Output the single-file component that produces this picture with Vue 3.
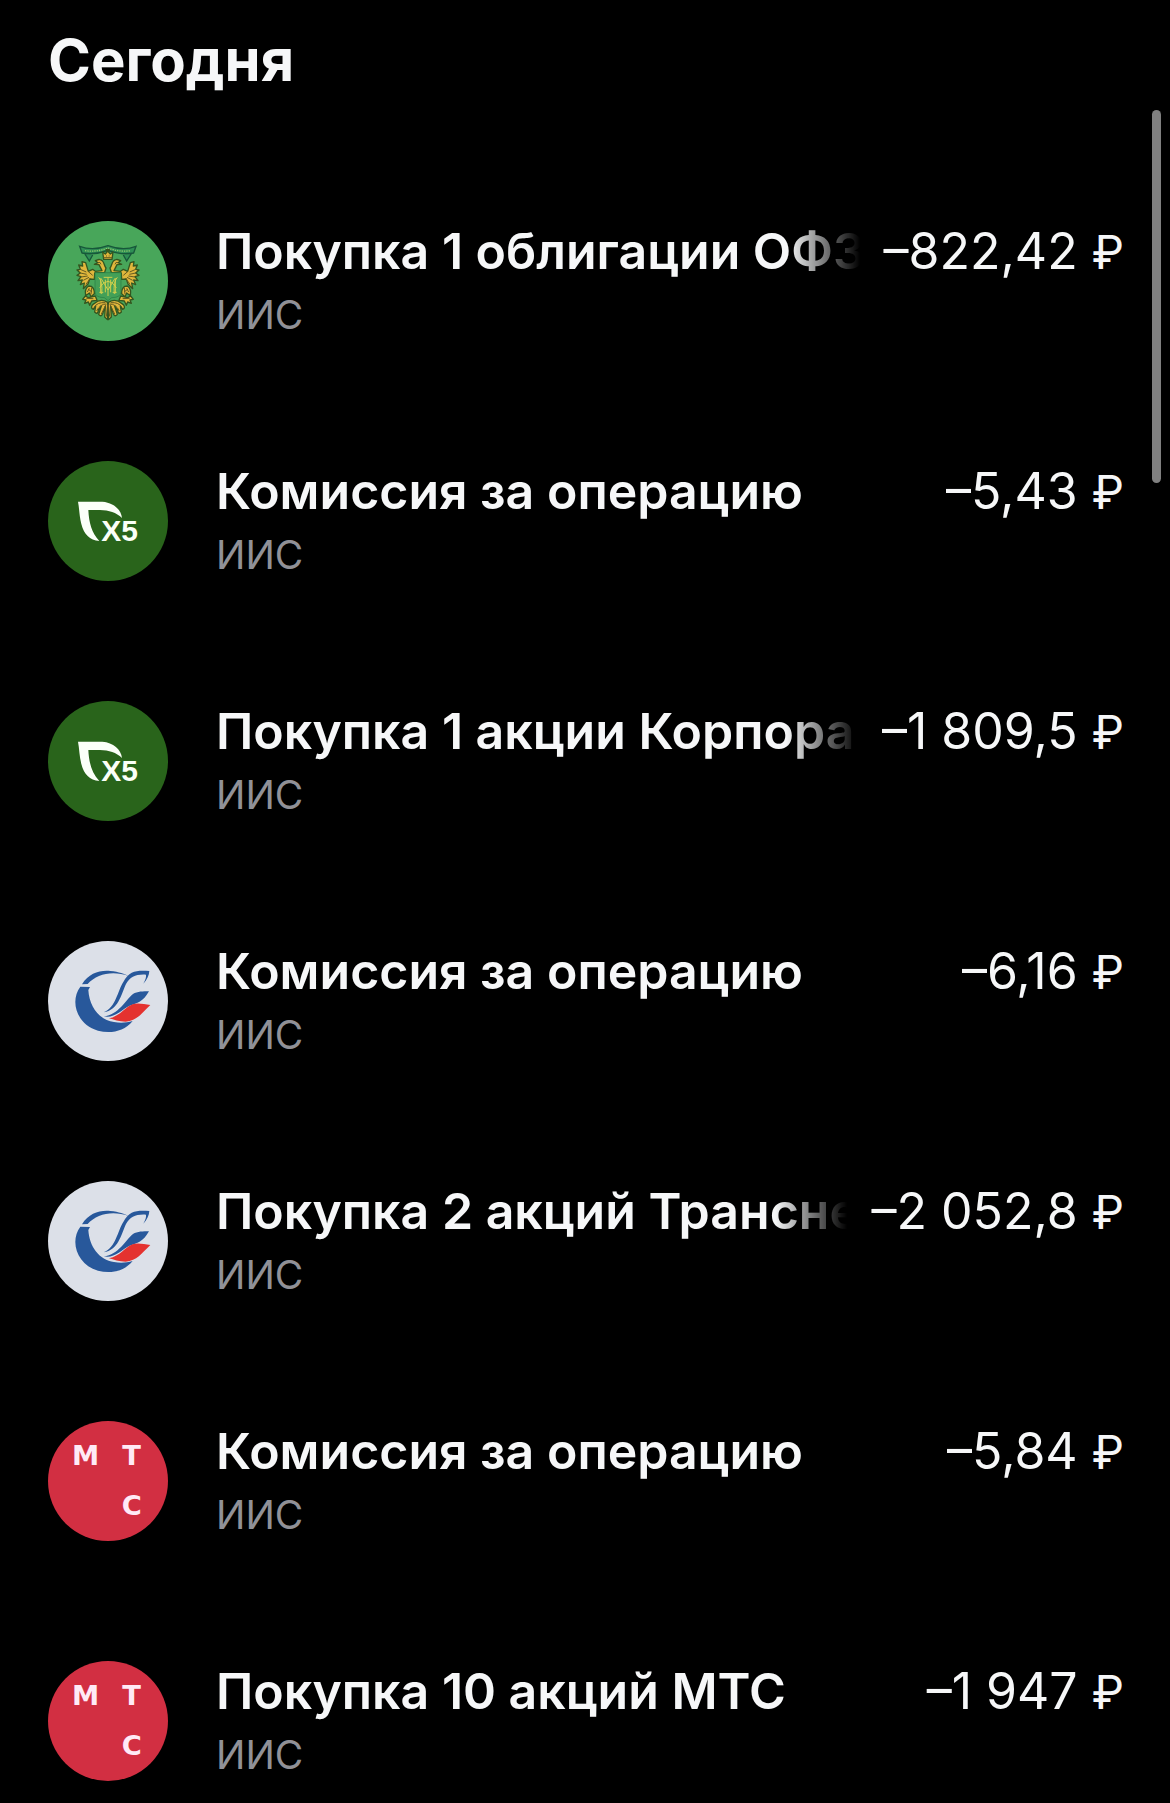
<script setup>
const operations = [
  { id: 1, logo: 'minfin', title: 'Покупка 1 облигации ОФЗ', account: 'ИИС', amount: '–822,42' },
  { id: 2, logo: 'x5', title: 'Комиссия за операцию', account: 'ИИС', amount: '–5,43' },
  { id: 3, logo: 'x5', title: 'Покупка 1 акции Корпора', account: 'ИИС', amount: '–1 809,5' },
  { id: 4, logo: 'transneft', title: 'Комиссия за операцию', account: 'ИИС', amount: '–6,16' },
  { id: 5, logo: 'transneft', title: 'Покупка 2 акций Трансне', account: 'ИИС', amount: '–2 052,8' },
  { id: 6, logo: 'mts', title: 'Комиссия за операцию', account: 'ИИС', amount: '–5,84' },
  { id: 7, logo: 'mts', title: 'Покупка 10 акций МТС', account: 'ИИС', amount: '–1 947' }
]
</script>

<template>
  <main class="feed">
    <div class="scroller">
      <h1 class="day">Сегодня</h1>
      <ul class="operations">
        <li v-for="op in operations" :key="op.id" class="operation">
          <svg class="logo" :class="op.logo" viewBox="24 33 360 360" aria-hidden="true">
            <!-- Double-headed eagle with a shield -->
            <template v-if="op.logo === 'minfin'">
              <path class="ribbon" d="M119 109 Q158 124 204 107 Q250 124 288 109 L281 129 Q245 136 204 121 Q164 136 126 129 Z M134 131 l14 22 l10 -18 M274 131 l-14 22 l-10 -18" />
              <path class="ribbon-text" d="M135 122 Q170 127 204 114 Q238 127 273 122" />
              <g v-for="side in [1, -1]" :key="side" :transform="side === 1 ? undefined : 'translate(408 0) scale(-1 1)'">
                <g class="gold">
                  <path d="M198 174 C191 167 194 151 180 149 C174 147 171 151 166 152 L174 158 L163 163 L177 164 L186 182 L166 184 L158 178 L145 184 L137 158 L126 155 L128 168 L116 165 L121 178 L111 180 L121 189 L111 196 L123 200 L114 212 L127 210 L121 224 L133 219 L130 236 L144 222 L149 207 L163 208 L164 189 L194 187 Z" />
                  <path d="M146 228 Q133 236 137 257 L148 249 L153 260 L163 251 Q164 236 154 229 Z" />
                  <path d="M166 258 L145 263 L136 258 L128 268 L138 270 L134 280 L145 276 L149 286 L155 273 L171 271 Z" />
                  <path d="M203 277 C190 269 177 268 162 281 C152 287 153 296 160 298 L167 288 L164 306 C171 314 175 307 175 300 L184 288 L176 313 C183 322 188 315 190 305 L196 289 L194 321 L203 329 Z" />
                </g>
                <g class="feather">
                  <path d="M121 178 L139 186 M121 189 L140 193 M123 201 L143 198 M130 211 L147 202 M138 223 L151 205 M144 184 L158 196" />
                  <path d="M174 158 Q181 154 183 163 M144 237 L156 246 M142 246 L148 235 M155 233 L153 253" />
                  <path d="M162 292 Q172 276 196 278 M170 303 Q180 282 199 282 M184 312 L198 284 M199 320 L203 283 M139 265 L160 266" />
                </g>
              </g>
              <path class="gold" d="M188 126 L196 132 L203 123 L211 132 L219 126 L216 148 H191 Z M199 119 h9 v4 h-9 Z" />
              <path class="feather" d="M191 143 H216 M198 138 h3 M206 138 h3" />
              <path class="shield" d="M165 188 H243 V245 Q243 263 215 263 L204 272 L193 263 Q165 263 165 245 Z" />
              <path class="monogram" d="M176 202 Q189 215 185 252 M232 202 Q219 215 223 252 M182 205 V250 M226 205 V250 M183 205 L204 240 L225 205 M191 202 H217 M204 202 V258 M179 233 Q190 215 204 214 Q218 215 229 233 M178 247 H190 M218 247 H230 M196 209 V247 M212 209 V247" />
            </template>

            <template v-else-if="op.logo === 'x5'">
              <path class="white" d="M114 155 H187 C220 158 243 177 246 204 C229 187 207 181 180 180 H145 C147 219 155 248 178 273 C149 270 132 254 124 222 C118 199 118 176 114 155 Z" />
              <text class="x5-text" x="184" y="273">X5</text>
            </template>

            <!-- Ring, wing and tricolour feathers -->
            <template v-else-if="op.logo === 'transneft'">
              <path class="blue" d="M126 163 C147 130 178 120 211 123 C237 125 254 133 266 138 C220 121 171 130 143 162 Z" />
              <path class="blue" d="M121 170 L150 171 L145 180 C148 230 178 270 222 276 C242 280 260 278 278 273 C252 305 211 312 174 302 C111 284 88 214 121 170 Z" />
              <path class="blue" d="M191 247 C228 232 232 184 250 156 C269 121 291 121 328 123 C327 136 322 148 310 161 C317 148 319 141 318 134 C289 132 270 140 258 162 C243 195 235 240 191 247 Z" />
              <path class="blue" d="M191 259 C237 254 255 211 279 192 C292 184 310 184 327 184 C309 216 292 220 269 227 C243 240 223 266 191 259 Z" />
              <path class="red" d="M207 265 C240 259 256 231 278 223 C291 218 312 222 331 225 C304 251 291 272 257 275 C237 275 221 269 207 265 Z" />
            </template>

            <template v-else>
              <text class="mts-text" x="137" y="164">М</text>
              <text class="mts-text" x="275" y="164">Т</text>
              <text class="mts-text" x="275" y="315">С</text>
            </template>
          </svg>
          <div class="info">
            <span class="title">{{ op.title }}</span>
            <span class="account">{{ op.account }}</span>
          </div>
          <span class="amount">{{ op.amount }}&nbsp;<span class="currency">₽</span></span>
        </li>
      </ul>
    </div>
    <div class="thumb"></div>
  </main>
</template>

<style>
body {
  margin: 0;
  background: #000;
}
</style>

<style scoped>
.feed {
  position: relative;
  height: 100vh;
  overflow: hidden;
  background: #000;
  color: #f6f7f8;
  font-family: Inter, "Liberation Sans", sans-serif;
}
.scroller {
  height: 100%;
  overflow-y: auto;
  scrollbar-width: none;
}
.day {
  margin: 0;
  padding: 24px 48px 65px;
  font-size: 58px;
  font-weight: 700;
  line-height: 72px;
}
.operations {
  margin: 0;
  padding: 0;
  list-style: none;
}
.operation {
  display: flex;
  align-items: flex-start;
  box-sizing: border-box;
  height: 240px;
  padding: 60px 46px 60px 48px;
}
.logo {
  flex: none;
  width: 120px;
  height: 120px;
  margin-right: 48px;
  border-radius: 50%;
}
.info {
  display: flex;
  flex: 1;
  flex-direction: column;
  min-width: 0;
}
/* long names fade out before the amount */
.title {
  overflow: hidden;
  font-size: 50px;
  font-weight: 600;
  line-height: 60px;
  white-space: nowrap;
  mask-image: linear-gradient(to left, transparent, #000 72px);
}
.account {
  color: #919197;
  font-size: 39px;
  line-height: 68px;
}
.amount {
  flex: none;
  margin-left: 24px;
  font-size: 50px;
  line-height: 60px;
  white-space: nowrap;
}
.currency {
  font-size: 46px;
}
.thumb {
  position: absolute;
  top: 110px;
  right: 9px;
  width: 9px;
  height: 373px;
  border-radius: 5px;
  background: #808080;
}

.minfin {
  background: #48a65a;
}
.x5 {
  background: #29641b;
}
.transneft {
  background: #dce0e8;
}
.mts {
  background: #d22f42;
}
.ribbon {
  fill: #2f8f55;
  stroke: #17573a;
  stroke-width: 4;
}
.ribbon-text {
  fill: none;
  stroke: #8fc86a;
  stroke-width: 4;
  stroke-dasharray: 4 3;
}
.gold {
  fill: #dfb63c;
  stroke: #34561f;
  stroke-width: 4;
  stroke-linejoin: round;
}
.feather {
  fill: none;
  stroke: #665b20;
  stroke-width: 3;
}
.shield {
  fill: #43a057;
  stroke: #277b42;
  stroke-width: 2;
}
.monogram {
  fill: none;
  stroke: #d0cf4c;
  stroke-width: 3;
}
.white {
  fill: #fbfff8;
}
.x5-text {
  fill: #fbfff8;
  font-family: "Liberation Sans", sans-serif;
  font-size: 90px;
  font-weight: 700;
}
.blue {
  fill: #28589b;
}
.red {
  fill: #e4322f;
}
.mts-text {
  fill: #ffeaf6;
  font-family: "DejaVu Sans", sans-serif;
  font-size: 82px;
  font-weight: 700;
  text-anchor: middle;
}
</style>
